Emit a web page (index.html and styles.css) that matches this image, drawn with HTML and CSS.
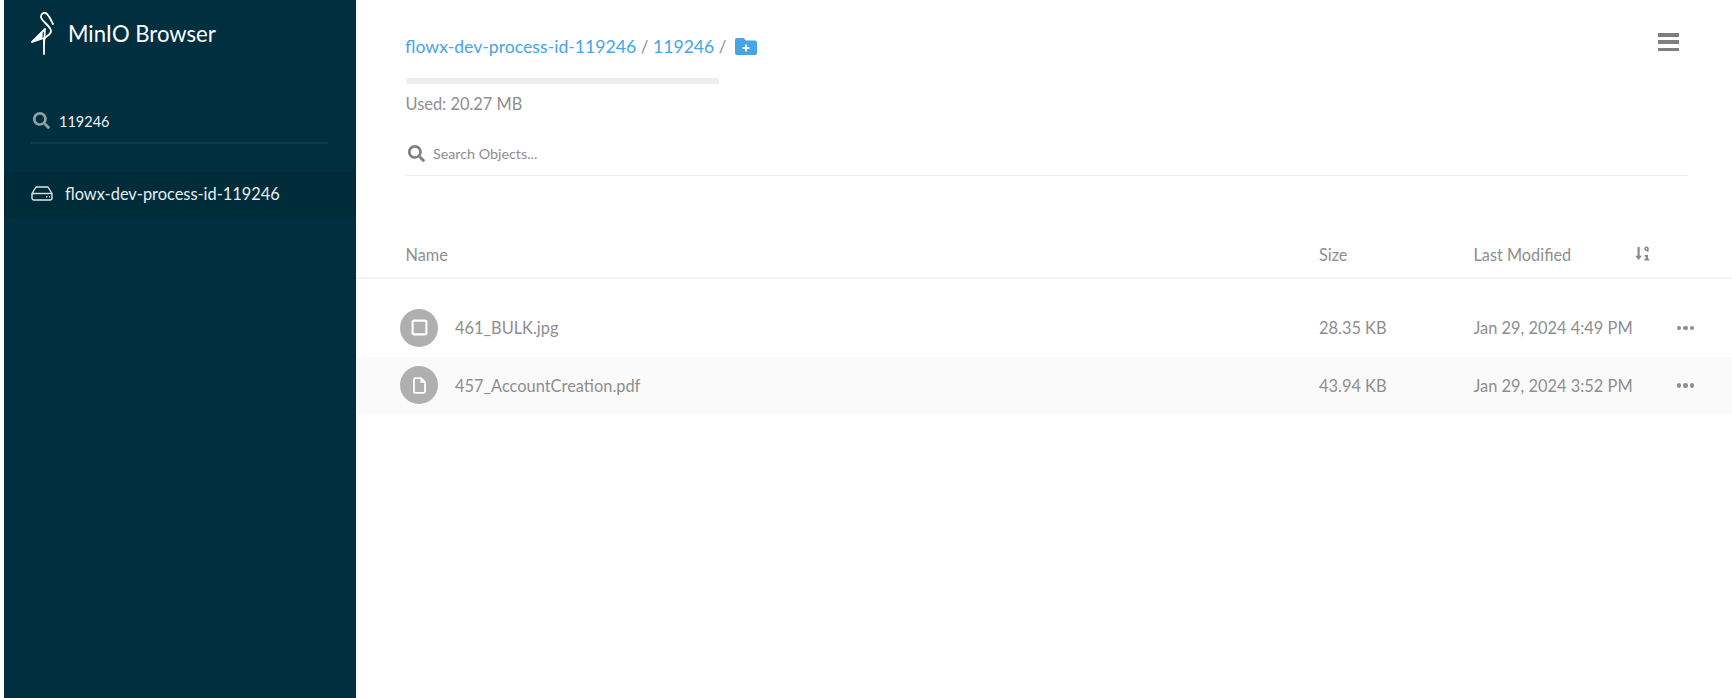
FILE: index.html
```html
<!DOCTYPE html>
<html lang="en">
<head>
<meta charset="utf-8">
<title>MinIO Browser</title>
<link rel="stylesheet" href="styles.css">
</head>
<body>
<div class="app">
  <aside class="sidebar">
    <header class="brand">
      <svg class="logo" viewBox="0 0 24 44" width="24" height="44" fill="none" stroke="#fff" stroke-width="1.8" stroke-linecap="round" stroke-linejoin="round">
        <path d="M14 43V29C14 25 21 25 21 20C21 15 11 10 11 6C11 3 13 1.500 15.500 2C18 2.500 19.500 6 23 13"/>
        <path d="M14 33L15 18L2 31L14 27"/>
        <path d="M2.500 30.500L12 21L12 26.500Z" fill="#fff" stroke-width="1"/>
      </svg>
      <span class="brand-name">MinIO Browser</span>
    </header>
    <div class="side-search">
      <svg class="search-icon" viewBox="0 0 512 512" width="17" height="17"><path fill="#8fa0a6" d="M505 442.700L405.300 343c-4.500-4.500-10.600-7-17-7H372c27.600-35.300 44-79.700 44-128C416 93.100 322.900 0 208 0S0 93.100 0 208s93.100 208 208 208c48.300 0 92.700-16.400 128-44v16.300c0 6.400 2.500 12.500 7 17l99.700 99.700c9.400 9.400 24.600 9.400 33.900 0l28.300-28.300c9.400-9.400 9.400-24.600.1-34zM208 336c-70.700 0-128-57.200-128-128 0-70.700 57.200-128 128-128 70.700 0 128 57.200 128 128 0 70.700-57.200 128-128 128z"/></svg>
      <span class="side-search-text">119246</span>
    </div>
    <div class="bucket">
      <svg class="drive" viewBox="0 0 22 16" width="22" height="16" fill="none" stroke="#dfe5e7" stroke-width="1.400"><path d="M5 2h12l4 6.500V13a2 2 0 0 1-2 2H3a2 2 0 0 1-2-2V8.500Z" stroke-linejoin="round"/><path d="M1 8.500h20"/><path d="M15 11.800h1.500M18 11.800h1" stroke-width="1.600"/></svg>
      <span class="bucket-name">flowx-dev-process-id-119246</span>
    </div>
  </aside>
  <main class="main">
    <section class="top">
      <div class="crumbs">
        <a class="crumb">flowx-dev-process-id-119246</a>
        <span class="sep">/</span>
        <a class="crumb">119246</a>
        <span class="sep">/</span>
        <svg class="new-folder" viewBox="0 0 22 17" width="22" height="17"><path fill="#46a5e5" d="M2 0h6.500l2.500 2.500h9a2 2 0 0 1 2 2V15a2 2 0 0 1-2 2H2a2 2 0 0 1-2-2V2a2 2 0 0 1 2-2Z"/><path stroke="#fff" stroke-width="2" d="M11 6.500v7M7.500 10h7"/></svg>
      </div>
      <button class="menu" aria-label="Menu"><span></span><span></span><span></span></button>
    </section>
    <div class="usage"></div>
    <p class="used">Used: 20.27 MB</p>
    <div class="object-search">
      <svg viewBox="0 0 512 512" width="17" height="17"><path fill="#7f7f7f" d="M505 442.700L405.300 343c-4.500-4.500-10.600-7-17-7H372c27.600-35.300 44-79.700 44-128C416 93.100 322.900 0 208 0S0 93.100 0 208s93.100 208 208 208c48.300 0 92.700-16.400 128-44v16.300c0 6.400 2.500 12.500 7 17l99.700 99.700c9.400 9.400 24.600 9.400 33.900 0l28.300-28.300c9.400-9.400 9.400-24.600.1-34zM208 336c-70.700 0-128-57.200-128-128 0-70.700 57.200-128 128-128 70.700 0 128 57.200 128 128 0 70.700-57.200 128-128 128z"/></svg>
      <span>Search Objects...</span>
    </div>
    <div class="table-head">
      <span class="col-name">Name</span>
      <span class="col-size">Size</span>
      <span class="col-mod">Last Modified</span>
      <svg class="sort" viewBox="0 0 15 15" width="15" height="15"><path fill="#8a8a8a" d="M2.500 1h2.200v8.800h2.300L3.600 14 .2 9.800h2.300Z"/><path fill="none" stroke="#8a8a8a" stroke-width="1.600" d="M11.500 1.300a1.500 1.500 0 1 0 .1 0Zm1.300 1.500v2.900"/><path fill="#8a8a8a" d="M9.500 9h3.500v3.800h1.200V14.500H9.300v-1.700h1.400v-2.200H9.500Z"/></svg>
    </div>
    <div class="rows">
      <div class="row">
        <span class="col-name name-cell">
          <span class="file-icon"><svg viewBox="0 0 16 16" width="17" height="17" fill="none" stroke="#fff" stroke-width="2"><rect x="1.500" y="1.500" width="13" height="13" rx="1.500"/></svg></span>
          <span>461_BULK.jpg</span>
        </span>
        <span class="col-size">28.35 KB</span>
        <span class="col-mod">Jan 29, 2024 4:49 PM</span>
        <span class="dots"><i></i><i></i><i></i></span>
      </div>
      <div class="row alt">
        <span class="col-name name-cell">
          <span class="file-icon"><svg viewBox="0 0 14 18" width="13" height="17"><path fill="none" stroke="#fff" stroke-width="2" stroke-linejoin="round" d="M2.500 1H8.500L13 5.500V15.500a1.500 1.500 0 0 1-1.500 1.500h-9A1.500 1.500 0 0 1 1 15.500V2.500A1.500 1.500 0 0 1 2.500 1Z"/><path fill="#fff" d="M8 1h1l4 4v1H8Z"/></svg></span>
          <span>457_AccountCreation.pdf</span>
        </span>
        <span class="col-size">43.94 KB</span>
        <span class="col-mod">Jan 29, 2024 3:52 PM</span>
        <span class="dots"><i></i><i></i><i></i></span>
      </div>
    </div>
  </main>
</div>
</body>
</html>
```
FILE: styles.css
```css
* { box-sizing: border-box; }
html, body { margin: 0; height: 100%; background: #fff; }
body { font-family: Lato, "Liberation Sans", sans-serif; color: #8e8e8e; overflow: hidden; }
.app { display: flex; height: 698px; padding-left: 4px; }

.sidebar { width: 352px; flex: none; background: #002f3f; color: #fff; }
.brand { display: flex; align-items: center; height: 66px; padding-left: 26px; }
.logo { margin-top: -1px; flex: none; }
.brand-name { margin-left: 14px; padding-top: 2px; font-size: 22.100px; line-height: 24px; color: #fff; }
.side-search { display: flex; align-items: center; gap: 9px; height: 78px; margin: 0 28px 0 27px; padding: 35px 0 0 2px; border-bottom: 2px solid #0e3c4b; }
.side-search-text { font-size: 14.500px; color: #f0f3f4; }
.search-icon { flex: none; margin-top: -3px; }
.bucket { display: flex; align-items: center; height: 46px; margin-top: 28px; padding: 0 0 4px 27px; background: #002c3a; }
.drive { flex: none; }
.bucket-name { margin-left: 12px; font-size: 16.400px; color: #e8ecee; }

.main { flex: 1; min-width: 0; }
.top { display: flex; justify-content: space-between; padding: 33px 53px 0 50px; height: 78px; }
.crumbs { display: flex; align-items: center; height: 26px; font-size: 17.650px; margin-left: -1px; }
.crumb { color: #46a5e5; }
.sep { margin: 0 4.500px; color: #8e8e8e; font-size: 17px; }
.new-folder { margin-left: 4px; margin-top: 0; }
.menu { display: flex; flex-direction: column; justify-content: space-between; width: 21px; height: 18px; padding: 0; border: 0; background: none; }
.menu span { display: block; height: 3.500px; background: #7f7f7f; }

.usage { width: 313px; height: 6px; margin-left: 50px; background: #eeeeee; border-radius: 2px; }
.used { margin: 10px 0 0 49.500px; font-size: 16.400px; line-height: 20px; color: #8e8e8e; }
.object-search { display: flex; align-items: center; gap: 8px; height: 62px; margin: 0 44px 0 50px; padding: 18px 0 0 2px; border-bottom: 1px solid #eeeeee; font-size: 14.300px; color: #8e8e8e; }
.object-search svg { flex: none; margin-top: -1px; }

.table-head { display: flex; align-items: center; height: 103px; padding: 55px 0 0 49.500px; border-bottom: 2px solid #f5f5f5; font-size: 16.300px; }
.col-name { width: 913.500px; flex: none; }
.col-size { width: 154.500px; flex: none; }
.col-mod { width: 163px; flex: none; }
.sort { flex: none; margin: -2px 0 0 -2px; }

.rows { padding-top: 20px; }
.row { display: flex; align-items: center; height: 57.500px; padding-left: 49.500px; font-size: 16.400px; color: #8e8e8e; }
.row.alt { background: #fafafa; }
.name-cell { display: flex; align-items: center; gap: 17px; margin-left: 0.500px; width: 913px; }
.file-icon { display: flex; align-items: center; justify-content: center; width: 38px; height: 38px; margin-left: -6px; border-radius: 50%; background: #afafaf; flex: none; }
.dots { display: flex; gap: 2px; margin-left: 40px; }
.dots i { display: block; width: 4.500px; height: 4.500px; border-radius: 50%; background: #8e8e8e; }
```
